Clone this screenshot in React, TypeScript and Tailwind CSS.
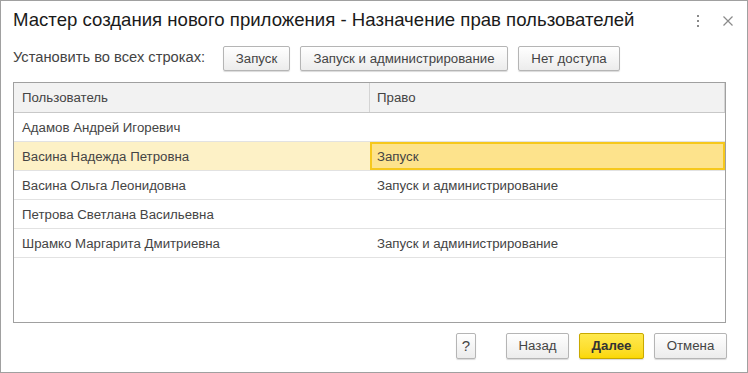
import React from "react";

const rows = [
  { user: "Адамов Андрей Игоревич", right: "" },
  { user: "Васина Надежда Петровна", right: "Запуск", active: true },
  { user: "Васина Ольга Леонидовна", right: "Запуск и администрирование" },
  { user: "Петрова Светлана Васильевна", right: "" },
  { user: "Шрамко Маргарита Дмитриевна", right: "Запуск и администрирование" },
];

function Btn({ children, className = "" }: { children: React.ReactNode; className?: string }) {
  return (
    <button
      className={`h-full rounded-[2px] border border-[#b5b5b5] bg-gradient-to-b from-white to-[#ececec] text-[13.25px] text-[#444] shadow-[0_1px_1px_rgba(0,0,0,0.15)] ${className}`}
    >
      {children}
    </button>
  );
}

export default function App() {
  return (
    <div className="w-[748px] h-[373px] border border-[#a0a0a0] bg-white flex flex-col font-['Liberation_Sans',Arial,sans-serif] text-[#333]">
      {/* Title */}
      <div className="h-[45px] flex items-start pl-[12px] pr-[14px] pt-[7px]">
        <h1 className="flex-1 text-[18.6px] leading-[24px] text-[#1a1a1a]">
          Мастер создания нового приложения - Назначение прав пользователей
        </h1>
        <div className="flex items-center gap-[23px] mt-[7px]">
          <svg width="4" height="12" viewBox="0 0 4 12">
            <rect x="1" y="0" width="2" height="2" fill="#8a8a8a" />
            <rect x="1" y="5" width="2" height="2" fill="#8a8a8a" />
            <rect x="1" y="10" width="2" height="2" fill="#8a8a8a" />
          </svg>
          <svg width="10" height="10" viewBox="0 0 10 10">
            <path d="M0.5 0.5 L9.5 9.5 M9.5 0.5 L0.5 9.5" stroke="#8a8a8a" strokeWidth="1.2" />
          </svg>
        </div>
      </div>

      {/* Toolbar */}
      <div className="h-[25px] flex items-center pl-[12px] gap-[10px]">
        <span className="w-[200px] text-[14.7px] text-[#444] -mt-[2px]">Установить во всех строках:</span>
        <Btn className="w-[67px]">Запуск</Btn>
        <Btn className="w-[208px]">Запуск и администрирование</Btn>
        <Btn className="w-[102px]">Нет доступа</Btn>
      </div>

      {/* Table */}
      <div className="mt-[11px] ml-[12px] w-[713px] h-[241px] border border-[#a0a0a0] text-[13.25px] text-[#444]">
        <div className="h-[30px] flex bg-[#f2f2f2] border-b border-[#c8c8c8]">
          <div className="w-[356px] flex items-center pl-[8px] border-r border-[#d4d4d4]">Пользователь</div>
          <div className="flex-1 flex items-center pl-[7px] border-r border-[#d4d4d4]">Право</div>
        </div>
        {rows.map((r) => (
          <div key={r.user} className="h-[29px] flex border-b border-[#e2e2e2]">
            <div
              className={`w-[356px] flex items-center pl-[8px] pt-[2px] ${r.active ? "bg-[#fdf1c6]" : ""}`}
            >
              {r.user}
            </div>
            <div
              className={`flex-1 flex items-center pt-[2px] ${
                r.active ? "bg-[#fde38c] border-2 border-[#f6c81c] pl-[5px]" : "pl-[7px]"
              }`}
            >
              {r.right}
            </div>
          </div>
        ))}
      </div>

      {/* Footer */}
      <div className="mt-[10px] h-[26px] flex justify-end pr-[20px]">
        <Btn className="w-[20px] text-[15px] text-[#222] mr-[30px]">?</Btn>
        <div className="flex gap-[10px]">
          <Btn className="w-[63px] text-[#3a5a80]">Назад</Btn>
          <button className="h-full w-[65px] rounded-[2px] border border-[#c9a900] bg-gradient-to-b from-[#ffe94d] to-[#fbd800] text-[13.25px] font-bold text-[#333] shadow-[0_1px_1px_rgba(0,0,0,0.15)]">
            Далее
          </button>
          <Btn className="w-[73px]">Отмена</Btn>
        </div>
      </div>
    </div>
  );
}
